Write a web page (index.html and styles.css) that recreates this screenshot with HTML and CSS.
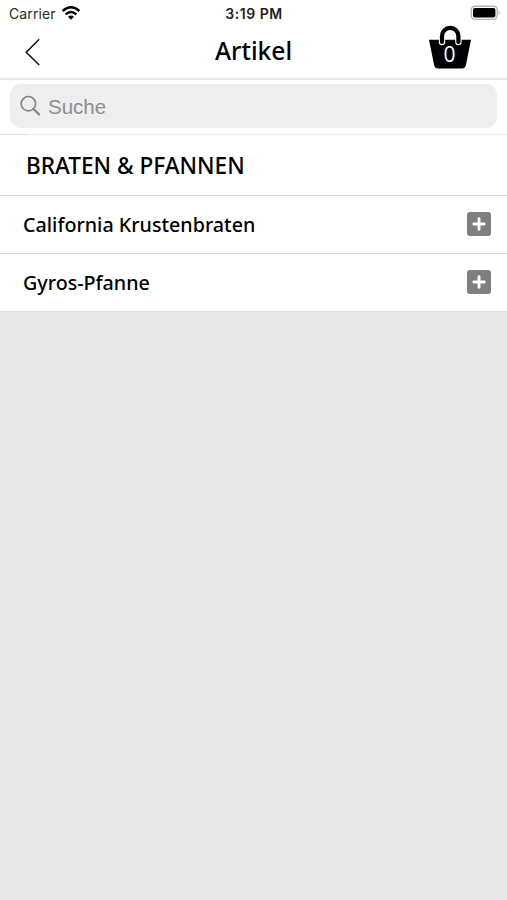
FILE: index.html
```html
<!DOCTYPE html>
<html lang="de">
<head>
<meta charset="utf-8">
<title>Artikel</title>
<link rel="stylesheet" href="styles.css">
</head>
<body>
<div class="status">
  <div class="carrier"><span class="carrier-name">Carrier</span>
    <svg class="wifi" width="20" height="16" viewBox="0 0 20 16"><g fill="none" stroke="#000" stroke-width="2.4"><path d="M1.600 6Q10-1.400 18.400 6"/><path d="M4.600 9.300Q10 4.700 15.400 9.300"/></g><path d="M7 11.800Q10 9.300 13 11.800L10 14.800Z"/></svg>
  </div>
  <span class="clock">3:19 PM</span>
  <svg class="battery" width="31" height="16" viewBox="0 0 31 16"><rect x="1.200" y="1.200" width="26" height="13.200" rx="3.800" fill="#fff" stroke="#b5b5b5" stroke-width="1.400"/><rect x="3" y="3" width="22.400" height="9.600" rx="1.800"/><path d="M28.600 5.300q2.400 2.500 0 5z" fill="#b5b5b5"/></svg>
</div>
<header class="nav">
  <svg class="back" width="18" height="28" viewBox="0 0 18 28"><path d="M15.200 1.200L2.200 14.200L15.200 27" fill="none" stroke="#111" stroke-width="1.500"/></svg>
  <h1 class="title">Artikel</h1>
  <div class="cart">
    <svg class="basket" width="44" height="46" viewBox="0 0 44 46"><path d="M1 13.800H43L37.800 39.500Q37 42.500 34 42.500H10Q7 42.500 6.200 39.500Z"/><path d="M14 16V10a8.200 8.200 0 0 1 16.400 0V16" fill="none" stroke="#fff" stroke-width="6.400" stroke-linecap="round"/><path d="M14 16V10a8.200 8.200 0 0 1 16.400 0V16" fill="none" stroke="#000" stroke-width="4.200" stroke-linecap="round"/></svg>
    <span class="count">0</span>
  </div>
</header>
<div class="search">
  <div class="field">
    <svg width="22" height="22" viewBox="0 0 22 22" fill="none" stroke="#858585"><circle cx="8.400" cy="8.700" r="7.200" stroke-width="1.600"/><path d="M13.600 14L19 19.400" stroke-width="2.200" stroke-linecap="round"/></svg>
    <span class="placeholder">Suche</span>
  </div>
</div>
<main class="list">
  <h2 class="section"><span>BRATEN &amp; PFANNEN</span></h2>
  <div class="row"><span class="name">California Krustenbraten</span><svg class="add" width="24" height="24" viewBox="0 0 24 24"><rect width="24" height="24" rx="3" fill="#7f7f7f"/><path d="M12 6.800V17.200M6.800 12H17.200" stroke="#fff" stroke-width="2.900" stroke-linecap="round"/></svg></div>
  <div class="row"><span class="name">Gyros-Pfanne</span><svg class="add" width="24" height="24" viewBox="0 0 24 24"><rect width="24" height="24" rx="3" fill="#7f7f7f"/><path d="M12 6.800V17.200M6.800 12H17.200" stroke="#fff" stroke-width="2.900" stroke-linecap="round"/></svg></div>
</main>
</body>
</html>
```
FILE: styles.css
```css
* { box-sizing: border-box; }
body { margin: 0; min-height: 100vh; background: #e7e7e7; color: #000; font-family: "Noto Sans", "Open Sans", sans-serif; }
svg { display: block; flex: none; }
.status { display: grid; grid-template-columns: 1fr auto 1fr; align-items: center; height: 26px; padding: 1px 6px 0 9px; background: #fff; font-family: Inter, "Liberation Sans", sans-serif; }
.carrier { display: flex; align-items: center; gap: 5px; font-size: 14px; color: #2b2b2b; letter-spacing: 0.1px; }
.wifi { margin-top: -2px; }
.clock { margin-left: -2px; font-size: 14px; font-weight: 600; letter-spacing: 0.55px; color: #222; }
.battery { justify-self: end; margin-top: -1px; }
.nav { display: grid; grid-template-columns: 1fr auto 1fr; height: 54px; padding: 0 35px 0 24px; background: #fff; border-bottom: 2px solid #e7e7e7; }
.back { margin-top: 12px; }
.title { margin: 8px 0 0 11px; font-size: 24.6px; line-height: 34px; font-weight: 500; }
.cart { position: relative; width: 44px; justify-self: end; }
.basket { overflow: visible; }
.count { position: absolute; left: 0; top: 14px; width: 43px; text-align: center; font: 21px/28px "Open Sans", sans-serif; color: #fff; }
.search { height: 54px; padding: 4px 10px 0; background: #fff; }
.field { display: flex; align-items: center; height: 44px; padding-left: 10px; border-radius: 11px; background: #eee; }
.placeholder { margin: 1px 0 0 6px; font: 20.5px "Liberation Sans", sans-serif; color: #8d8d8d; }
.section { display: flex; align-items: center; height: 62px; margin: 0; padding: 1px 0 0 26px; background: linear-gradient(90deg, #dedede 26px, #eee 26px) top / 100% 1px no-repeat #fff; border-bottom: 1px solid #dcdcdc; font-size: 22.6px; font-weight: 500; }
.row { display: flex; align-items: center; justify-content: space-between; height: 58px; padding: 0 16px 0 23px; background: #fff; border-bottom: 1px solid #dcdcdc; }
.add { margin-top: -1px; }
.name { font-size: 19.7px; font-weight: 500; }
```
